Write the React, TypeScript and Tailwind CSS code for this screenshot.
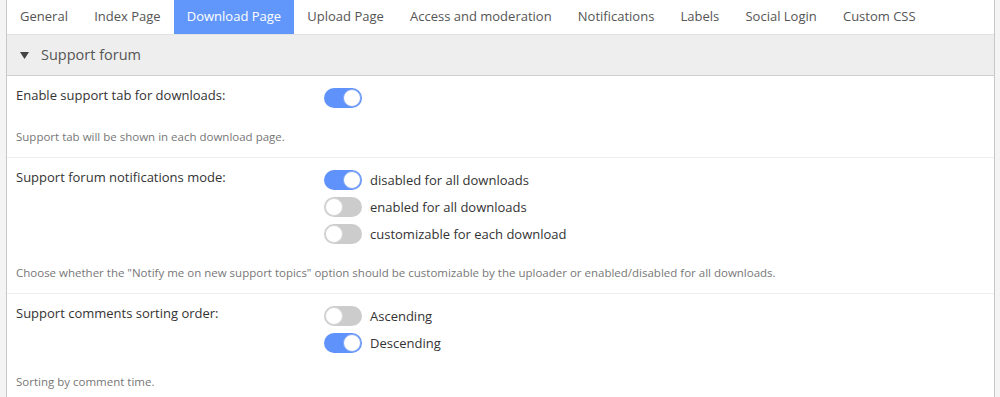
const tabs = [
  'General',
  'Index Page',
  'Download Page',
  'Upload Page',
  'Access and moderation',
  'Notifications',
  'Labels',
  'Social Login',
  'Custom CSS',
];

type Option = { label?: string; on: boolean };

const settings: { title: string; options: Option[]; help: string }[] = [
  {
    title: 'Enable support tab for downloads:',
    options: [{ on: true }],
    help: 'Support tab will be shown in each download page.',
  },
  {
    title: 'Support forum notifications mode:',
    options: [
      { label: 'disabled for all downloads', on: true },
      { label: 'enabled for all downloads', on: false },
      { label: 'customizable for each download', on: false },
    ],
    help: 'Choose whether the "Notify me on new support topics" option should be customizable by the uploader or enabled/disabled for all downloads.',
  },
  {
    title: 'Support comments sorting order:',
    options: [
      { label: 'Ascending', on: false },
      { label: 'Descending', on: true },
    ],
    help: 'Sorting by comment time.',
  },
];

function Toggle({ on }: { on: boolean }) {
  return (
    <span
      className={`relative inline-block h-[20px] w-[38px] shrink-0 rounded-full ${
        on ? 'bg-[#5f92fb]' : 'bg-[#cccccc]'
      }`}
    >
      <span
        className={`absolute top-[1px] h-[18px] w-[18px] rounded-full bg-white ${
          on ? 'right-[1px] border border-[#7fa6f5]' : 'left-[1px] border border-[#d6d6d6]'
        }`}
      />
    </span>
  );
}

export default function App() {
  return (
    <div
      className="h-[397px] overflow-hidden bg-[#f4f4f4] pl-[6px] pr-[5px]"
      style={{ fontFamily: '"Open Sans", "Noto Sans", sans-serif' }}
    >
      <div className="h-full border-x border-[#c8c8c8] bg-white">
        {/* tabs */}
        <div className="flex h-[34px] items-stretch">
          {tabs.map((t) => (
            <div
              key={t}
              className={`flex items-center px-[13.1px] text-[13px] ${
                t === 'Download Page' ? 'bg-[#6197fb] text-white' : 'text-[#555]'
              }`}
            >
              {t}
            </div>
          ))}
        </div>

        {/* section header */}
        <div className="flex h-[42px] items-center gap-[12px] border-y border-t-[#e2e2e2] border-b-[#cfcfcf] bg-[#eeeeee] pl-[13px]">
          <svg width="9" height="7" viewBox="0 0 9 7" className="mt-[1px]">
            <path d="M0 0 H9 L4.5 7 Z" fill="#444" />
          </svg>
          <span className="text-[14.5px] text-[#555]">Support forum</span>
        </div>

        {settings.map((s) => (
          <div key={s.title} className="border-b border-[#eeeeee] pb-[12px] pl-[9px] pt-[9px]">
            <div className="flex items-start">
              <div className="w-[308px] text-[13px] leading-[20px] text-[#333]">{s.title}</div>
              <div className="mt-[3px] flex flex-col gap-[7px]">
                {s.options.map((o, i) => (
                  <div key={i} className="flex items-center gap-[8px]">
                    <Toggle on={o.on} />
                    {o.label && <span className="text-[13px] leading-[20px] text-[#333]">{o.label}</span>}
                  </div>
                ))}
              </div>
            </div>
            <p className="mt-[21px] text-[11.5px] leading-[16px] text-[#777]">{s.help}</p>
          </div>
        ))}
      </div>
    </div>
  );
}
